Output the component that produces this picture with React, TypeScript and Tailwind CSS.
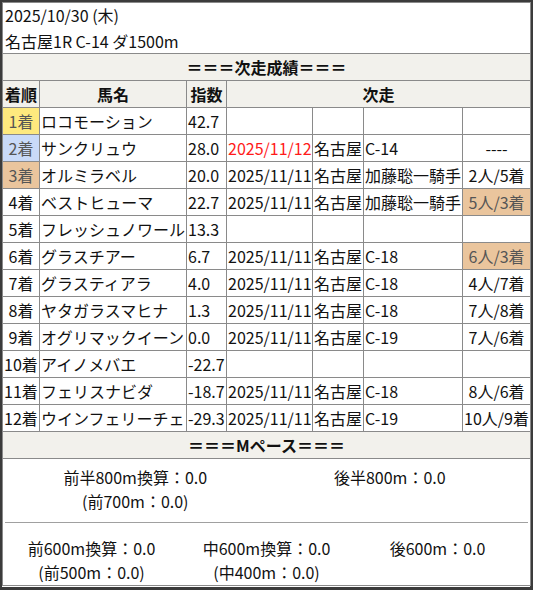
import React from "react";

type Row = {
  rank: string;
  rankBg?: string;
  name: string;
  idx: string;
  date?: string;
  red?: boolean;
  venue?: string;
  cls?: string;
  res?: string;
  resBg?: boolean;
};

const rows: Row[] = [
  { rank: "1着", rankBg: "bg-[#fee97e]", name: "ロコモーション", idx: "42.7" },
  { rank: "2着", rankBg: "bg-[#c9daf8]", name: "サンクリュウ", idx: "28.0", date: "2025/11/12", red: true, venue: "名古屋", cls: "C-14", res: "----" },
  { rank: "3着", rankBg: "bg-[#eac59d]", name: "オルミラベル", idx: "20.0", date: "2025/11/11", venue: "名古屋", cls: "加藤聡一騎手", res: "2人/5着" },
  { rank: "4着", name: "ベストヒューマ", idx: "22.7", date: "2025/11/11", venue: "名古屋", cls: "加藤聡一騎手", res: "5人/3着", resBg: true },
  { rank: "5着", name: "フレッシュノワール", idx: "13.3" },
  { rank: "6着", name: "グラスチアー", idx: "6.7", date: "2025/11/11", venue: "名古屋", cls: "C-18", res: "6人/3着", resBg: true },
  { rank: "7着", name: "グラスティアラ", idx: "4.0", date: "2025/11/11", venue: "名古屋", cls: "C-18", res: "4人/7着" },
  { rank: "8着", name: "ヤタガラスマヒナ", idx: "1.3", date: "2025/11/11", venue: "名古屋", cls: "C-18", res: "7人/8着" },
  { rank: "9着", name: "オグリマックイーン", idx: "0.0", date: "2025/11/11", venue: "名古屋", cls: "C-19", res: "7人/6着" },
  { rank: "10着", name: "アイノメバエ", idx: "-22.7" },
  { rank: "11着", name: "フェリスナビダ", idx: "-18.7", date: "2025/11/11", venue: "名古屋", cls: "C-18", res: "8人/6着" },
  { rank: "12着", name: "ウインフェリーチェ", idx: "-29.3", date: "2025/11/11", venue: "名古屋", cls: "C-19", res: "10人/9着" },
];

const td = "border border-[#8a8a8a] px-[1px] py-0 whitespace-nowrap overflow-hidden";

export default function App() {
  return (
    <div className="w-[533px] h-[590px] bg-[#3b3b3b] pt-[2px] pl-[2px] font-['Noto_Sans_CJK_JP',sans-serif] text-[16px] text-[#111]">
      <div className="w-[528px] h-[585px] bg-white">
        <table className="table-fixed border-collapse w-[528px]">
          <colgroup>
            <col className="w-[37px]" />
            <col className="w-[147px]" />
            <col className="w-[40px]" />
            <col className="w-[86px]" />
            <col className="w-[51px]" />
            <col className="w-[99px]" />
            <col className="w-[68px]" />
          </colgroup>
          <tbody>
            <tr>
              <td colSpan={7} className={`${td} pl-[2px] pt-0 pb-0`}>
                <div className="h-[25px] leading-[25px]">2025/10/30 (木)</div>
                <div className="h-[25px] leading-[26px]">名古屋1R C-14 ダ1500m</div>
              </td>
            </tr>
            <tr className="h-[27px] bg-[#f2f1ec]">
              <td colSpan={7} className={`${td} text-center font-bold`}>＝＝＝次走成績＝＝＝</td>
            </tr>
            <tr className="h-[27px] bg-[#f2f1ec] font-bold">
              <td className={`${td} text-center`}>着順</td>
              <td className={`${td} text-center`}>馬名</td>
              <td className={`${td} text-center`}>指数</td>
              <td colSpan={4} className={`${td} text-center`}>次走</td>
            </tr>
            {rows.map((r) => (
              <tr key={r.rank} className="h-[27px]">
                <td className={`${td} text-center ${r.rankBg ? r.rankBg + " text-[#555]" : ""}`}>{r.rank}</td>
                <td className={`${td} text-left`}>{r.name}</td>
                <td className={`${td} text-left`}>{r.idx}</td>
                <td className={`${td} text-left ${r.red ? "text-[#ff1a1a]" : ""}`}>{r.date ?? ""}</td>
                <td className={`${td} text-left`}>{r.venue ?? ""}</td>
                <td className={`${td} text-left`}>{r.cls ?? ""}</td>
                <td className={`${td} text-center ${r.resBg ? "bg-[#eac59d] text-[#555]" : ""}`}>{r.res ?? ""}</td>
              </tr>
            ))}
            <tr className="h-[27px] bg-[#f2f1ec]">
              <td colSpan={7} className={`${td} text-center font-bold`}>＝＝＝Mペース＝＝＝</td>
            </tr>
            <tr>
              <td colSpan={7} className={`${td} p-0`}>
                <div className="grid grid-cols-2 pt-[6px] pb-[9px] leading-[24px]">
                  <div className="flex flex-col items-center">
                    <span>前半800m換算：0.0</span>
                    <span>(前700m：0.0)</span>
                  </div>
                  <div className="flex flex-col items-center pr-[16px]">
                    <span>後半800m：0.0</span>
                  </div>
                </div>
                <div className="mx-[1px] border-t border-[#a0a0a0]" />
                <div className="grid grid-cols-3 pt-[13px] pb-[1px] leading-[24px]">
                  <div className="flex flex-col items-center">
                    <span>前600m換算：0.0</span>
                    <span>(前500m：0.0)</span>
                  </div>
                  <div className="flex flex-col items-center">
                    <span>中600m換算：0.0</span>
                    <span>(中400m：0.0)</span>
                  </div>
                  <div className="flex flex-col items-center pr-[8px]">
                    <span>後600m：0.0</span>
                  </div>
                </div>
              </td>
            </tr>
          </tbody>
        </table>
      </div>
    </div>
  );
}
